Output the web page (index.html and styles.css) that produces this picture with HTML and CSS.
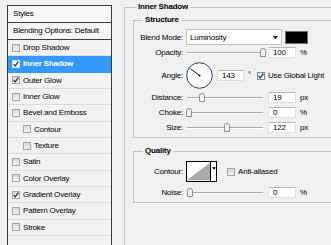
FILE: index.html
```html
<!DOCTYPE html>
<html>
<head>
<meta charset="utf-8">
<link rel="stylesheet" href="styles.css">
</head>
<body>
<div class="dialog">
  <div class="styles-panel">
    <div class="panel-head">Styles</div>
    <div class="panel-head">Blending Options: Default</div>
    <div class="item"><span class="cb"></span>Drop Shadow</div>
    <div class="item selected"><span class="cb"><svg viewBox="0 0 8 8"><path d="M1.6 4.1 L3.2 5.9 L6.4 1.7"/></svg></span>Inner Shadow</div>
    <div class="item"><span class="cb"><svg viewBox="0 0 8 8"><path d="M1.6 4.1 L3.2 5.9 L6.4 1.7"/></svg></span>Outer Glow</div>
    <div class="item"><span class="cb"></span>Inner Glow</div>
    <div class="item"><span class="cb"></span>Bevel and Emboss</div>
    <div class="item sub"><span class="cb"></span>Contour</div>
    <div class="item sub"><span class="cb"></span>Texture</div>
    <div class="item"><span class="cb"></span>Satin</div>
    <div class="item"><span class="cb"></span>Color Overlay</div>
    <div class="item"><span class="cb"><svg viewBox="0 0 8 8"><path d="M1.6 4.1 L3.2 5.9 L6.4 1.7"/></svg></span>Gradient Overlay</div>
    <div class="item"><span class="cb"></span>Pattern Overlay</div>
    <div class="item"><span class="cb"></span>Stroke</div>
  </div>

  <div class="settings">
    <fieldset class="group outer">
      <legend>Inner Shadow</legend>

      <fieldset class="group structure">
        <legend>Structure</legend>

        <div class="row r-blend">
          <span class="lbl">Blend Mode:</span>
          <div class="select"><span>Luminosity</span><svg class="arrow" viewBox="0 0 5 3"><path d="M0 0 H5 L2.5 3 Z"/></svg></div>
          <span class="swatch"></span>
        </div>

        <div class="row r-op">
          <span class="lbl">Opacity:</span>
          <div class="slider"><span class="thumb" style="left:73px"><svg viewBox="0 0 6 9"><path d="M0.5 2.5 Q0.5 0.5 3 0.5 Q5.5 0.5 5.5 2.5 V8.5 H0.5 Z"/></svg></span></div>
          <span class="num">100</span><span class="unit">%</span>
        </div>

        <div class="row r-angle">
          <span class="lbl">Angle:</span>
          <svg class="dial" viewBox="0 0 27 27"><circle cx="13.5" cy="13.5" r="12.8"/><path d="M13.5 13.5 L4.6 6.8"/><circle class="dot" cx="13.5" cy="13.5" r="1"/></svg>
          <span class="num angle-num">143</span><span class="deg">°</span>
          <span class="cb cb-global"><svg viewBox="0 0 8 8"><path d="M1.6 4.1 L3.2 5.9 L6.4 1.7"/></svg></span><span>Use Global Light</span>
        </div>

        <div class="row r-small">
          <span class="lbl">Distance:</span>
          <div class="slider"><span class="thumb" style="left:12px"><svg viewBox="0 0 6 9"><path d="M0.5 2.5 Q0.5 0.5 3 0.5 Q5.5 0.5 5.5 2.5 V8.5 H0.5 Z"/></svg></span></div>
          <span class="num">19</span><span class="unit">px</span>
        </div>

        <div class="row r-small">
          <span class="lbl">Choke:</span>
          <div class="slider"><span class="thumb" style="left:-1px"><svg viewBox="0 0 6 9"><path d="M0.5 2.5 Q0.5 0.5 3 0.5 Q5.5 0.5 5.5 2.5 V8.5 H0.5 Z"/></svg></span></div>
          <span class="num">0</span><span class="unit">%</span>
        </div>

        <div class="row r-small">
          <span class="lbl">Size:</span>
          <div class="slider"><span class="thumb" style="left:37px"><svg viewBox="0 0 6 9"><path d="M0.5 2.5 Q0.5 0.5 3 0.5 Q5.5 0.5 5.5 2.5 V8.5 H0.5 Z"/></svg></span></div>
          <span class="num">122</span><span class="unit">px</span>
        </div>
      </fieldset>

      <fieldset class="group quality">
        <legend>Quality</legend>

        <div class="row r-contour">
          <span class="lbl">Contour:</span>
          <div class="contour">
            <svg class="curve" viewBox="0 0 25 19"><path d="M0 19 L25 0 V19 Z"/></svg>
            <span class="contour-drop"><svg class="arrow" viewBox="0 0 5 3"><path d="M0 0 H5 L2.5 3 Z"/></svg></span>
          </div>
          <span class="cb cb-aa"></span><span>Anti-aliased</span>
        </div>

        <div class="row r-noise">
          <span class="lbl">Noise:</span>
          <div class="slider"><span class="thumb" style="left:0px"><svg viewBox="0 0 6 9"><path d="M0.5 2.5 Q0.5 0.5 3 0.5 Q5.5 0.5 5.5 2.5 V8.5 H0.5 Z"/></svg></span></div>
          <span class="num">0</span><span class="unit">%</span>
        </div>
      </fieldset>
    </fieldset>
  </div>
</div>
</body>
</html>
```

FILE: styles.css
```css
html, body {
  margin: 0;
  padding: 0;
}

body {
  width: 331px;
  height: 245px;
  overflow: hidden;
  background: #f0f0f0;
  color: #000;
  font-family: "Liberation Sans", Arial, sans-serif;
  font-size: 8px;
  letter-spacing: -0.2px;
}

.dialog {
  display: flex;
  align-items: flex-start;
  padding: 2px 0 0 7px;
}

/* ---------- left styles list ---------- */
.styles-panel {
  flex-shrink: 0;
  width: 105px;
  height: 240px;
  margin-top: 3px;
  box-sizing: border-box;
  border: 1px solid #3c3c3c;
  border-bottom: none;
  background: #f2f2f2;
  overflow: hidden;
}

.panel-head {
  height: 17px;
  box-sizing: border-box;
  line-height: 16px;
  padding-left: 5px;
  border-bottom: 1px solid #3c3c3c;
  background: #f6f6f6;
  white-space: nowrap;
}

.item {
  display: flex;
  align-items: center;
  height: 16.33px;
  box-sizing: border-box;
  padding-left: 4px;
  border-bottom: 1px solid #dcdcdc;
  white-space: nowrap;
}

.item.sub {
  padding-left: 15px;
}

.item.selected {
  background: #3399ff;
  color: #fff;
  font-weight: bold;
  border-bottom-color: #3399ff;
}

.cb {
  display: inline-block;
  flex-shrink: 0;
  width: 8px;
  height: 8px;
  box-sizing: border-box;
  margin-right: 3px;
  border: 1px solid #a4a4a4;
  background: linear-gradient(#d9d9d9, #f4f4f4);
}

.cb svg {
  display: block;
  width: 8px;
  height: 8px;
  margin: -1px 0 0 -1px;
}

.cb path {
  fill: none;
  stroke: #1e2a3a;
  stroke-width: 1.2;
}

.item.selected .cb {
  background: #fff;
  border-color: #d8e8ff;
}

/* ---------- right settings ---------- */
.settings {
  margin-left: 12px;
  flex-shrink: 0;
}

.group {
  margin: 0;
  min-inline-size: 0;
  box-sizing: border-box;
  border: 1px solid #c4c4c4;
  border-right: none;
}

.group legend {
  padding: 0 2px;
  line-height: 10px;
  font-weight: bold;
}

.outer {
  width: 207px;
  height: 243px;
  padding: 3px 0 0 8px;
  border-bottom: none;
  overflow: hidden;
}

.outer > legend {
  margin-left: 3px;
}

.structure,
.quality {
  width: 198px;
}

.structure {
  padding: 4px 0 3px 0;
}

.quality {
  margin-top: 8px;
  padding: 5px 0 4px 0;
}

.structure > legend,
.quality > legend {
  margin-left: 9px;
}

.row {
  display: flex;
  align-items: center;
  white-space: nowrap;
}

.lbl {
  flex-shrink: 0;
  width: 49px;
  margin-right: 3px;
  text-align: right;
}

.r-blend { height: 16px; }
.r-op { height: 13px; margin-top: 1px; }
.r-angle { height: 27px; margin-top: 3px; }
.r-small { height: 13px; margin-top: 2px; }
.r-contour { height: 21px; }
.r-noise { height: 12px; margin-top: 4px; }

.select {
  display: flex;
  align-items: center;
  justify-content: space-between;
  width: 96px;
  height: 16px;
  box-sizing: border-box;
  padding: 0 3px 0 3px;
  border: 1px solid #c2c2c2;
  background: #fff;
}

.arrow {
  display: block;
  width: 5px;
  height: 3px;
}

.arrow path {
  fill: #000;
}

.swatch {
  width: 23px;
  height: 13px;
  box-sizing: border-box;
  margin-left: 3px;
  border: 1px solid #6c6c6c;
  background: #000;
}

.slider {
  position: relative;
  flex-shrink: 0;
  width: 76px;
  height: 9px;
  margin: 0 5px 0 1px;
}

.slider::before {
  content: "";
  position: absolute;
  left: 0;
  right: 0;
  top: 4px;
  height: 0;
  border-top: 1px solid #a9a9a9;
  border-bottom: 1px solid #fff;
}

.thumb {
  position: absolute;
  top: 0;
  width: 6px;
  height: 9px;
}

.thumb svg {
  display: block;
  width: 6px;
  height: 9px;
}

.thumb path {
  fill: #f6f6f6;
  stroke: #8c8c8c;
  stroke-width: 1;
}

.num {
  flex-shrink: 0;
  width: 28px;
  height: 11px;
  line-height: 10px;
  box-sizing: border-box;
  padding-left: 4px;
  border: 1px solid #e2e2e2;
  border-top-color: #b8b8b8;
  background: #fff;
}

.unit {
  margin-left: 4px;
}

.dial {
  flex-shrink: 0;
  width: 27px;
  height: 27px;
}

.dial circle {
  fill: #fdfdfd;
  stroke: #2e3b57;
  stroke-width: 1;
}

.dial path {
  stroke: #111;
  stroke-width: 1;
}

.dial .dot {
  fill: #111;
  stroke: none;
}

.angle-num {
  width: 27px;
  margin-left: 4px;
}

.deg {
  align-self: flex-start;
  margin: 8px 6px 0 4px;
}

.cb-global {
  border-color: #7a8aa8;
  background: linear-gradient(#dde6f5, #f8f8f8);
}

.contour {
  display: flex;
  width: 31px;
  height: 21px;
  box-sizing: border-box;
  border: 1px solid #000;
  background: #fff;
}

.curve {
  display: block;
  width: 24px;
  height: 19px;
}

.curve path {
  fill: #a9a9a9;
}

.contour-drop {
  display: flex;
  align-items: flex-start;
  justify-content: center;
  width: 5px;
  padding-top: 5px;
  border-left: 1px solid #000;
}

.contour-drop .arrow {
  width: 4px;
  height: 3px;
}

.cb-aa {
  margin-left: 10px;
}
```
